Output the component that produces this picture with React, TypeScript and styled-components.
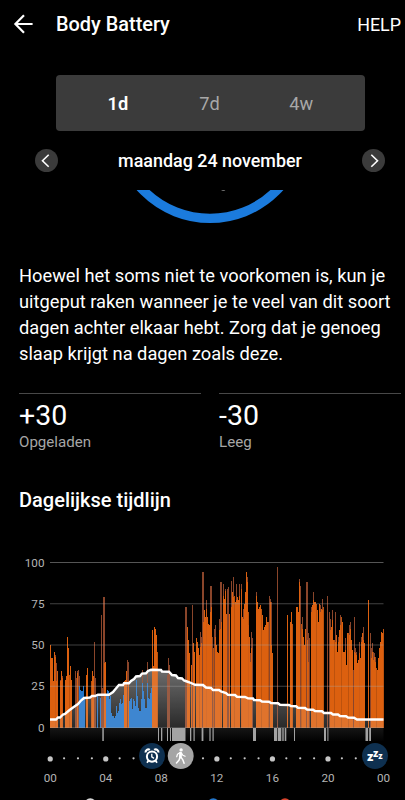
import styled, { createGlobalStyle } from "styled-components";

const colors = {
  stress: "#dc600f",
  stressDim: "#8a452a",
  rest: "#2476ca",
  ring: "#1b7bdd",
  muted: "#a6a6a6",
  panel: "#3b3b3b",
  badge: "#0e3050",
};

const GlobalStyle = createGlobalStyle`
  * {
    box-sizing: border-box;
  }

  body {
    margin: 0;
    background: #000;
    color: #fff;
    font-family: Roboto, "Liberation Sans", sans-serif;
  }
`;

const Screen = styled.div`
  width: 405px;
  height: 800px;
  overflow: hidden;
  background: #000;
`;

const Header = styled.header`
  display: flex;
  align-items: center;
  height: 48px;
  padding: 0 4px 0 12px;
`;

const HeaderTitle = styled.h1`
  flex: 1;
  margin: 0 0 0 22px;
  font-size: 19.9px;
  font-weight: 500;
`;

const HelpButton = styled.button`
  padding: 0;
  border: 0;
  background: none;
  color: #fff;
  font: 400 17.9px Roboto, sans-serif;
`;

const Tabs = styled.nav`
  display: flex;
  width: 309px;
  height: 56px;
  margin: 27px 0 0 56px;
  padding: 0 18px 0 16px;
  border-radius: 4px;
  background: ${colors.panel};
`;

const Tab = styled.button<{ $active?: boolean }>`
  flex: 1;
  padding: 0;
  border: 0;
  background: none;
  color: ${(props) => (props.$active ? "#fff" : "#a8a8a8")};
  font: ${(props) => (props.$active ? 600 : 400)} 18.2px Roboto, sans-serif;
`;

const DateRow = styled.div`
  display: flex;
  align-items: center;
  justify-content: space-between;
  height: 59px;
  padding: 0 20px 0 35px;
`;

const DateText = styled.div`
  font-size: 17.9px;
  font-weight: 500;
`;

const RoundButton = styled.button`
  display: flex;
  align-items: center;
  justify-content: center;
  width: 23px;
  height: 23px;
  padding: 0;
  border: 0;
  border-radius: 50%;
  background: ${colors.panel};
`;

const Gauge = styled.svg`
  display: block;
  width: 405px;
  height: 36px;
`;

const Message = styled.p`
  margin: 37px 0 0 19px;
  font-size: 18.27px;
  line-height: 26px;
  white-space: pre-line;
`;

const Stats = styled.div`
  display: grid;
  grid-template-columns: 182px 182px;
  gap: 18px;
  margin: 26px 0 0 19px;
`;

const Stat = styled.div`
  border-top: 1px solid #484848;
  padding-top: 5px;
`;

const StatValue = styled.div`
  font-size: 28.5px;
  line-height: 34px;
`;

const StatLabel = styled.div`
  color: ${colors.muted};
  font-size: 15.1px;
  line-height: 18px;
`;

const SectionTitle = styled.h2`
  margin: 36px 0 0 19px;
  font-size: 20px;
  font-weight: 500;
  line-height: 26px;
`;

const Timeline = styled.svg`
  display: block;
  width: 405px;
  height: 287px;
`;

const AxisLabel = styled.text`
  fill: #b4b4b4;
  font-size: 11.7px;
`;

const SleepLetter = styled.text<{ $size: number }>`
  fill: #fff;
  font-size: ${(props) => props.$size}px;
  font-weight: 900;
`;

type Run = { x: number; kind: "stress" | "dim" | "rest"; values: number[] };

// One value per pixel column, 0 is a gap
const runs: Run[] = [
  { x: 50, kind: "stress", values: [50, 42, 42, 28, 46, 43, 28, 34, 0, 0, 28, 34, 30, 0, 0, 29, 31, 55, 48, 32, 37, 29] },
  { x: 55, kind: "dim", values: [44, 39, 34, 0, 0, 29, 0, 31, 0, 0, 0, 0, 0, 48, 0, 37] },
  { x: 75, kind: "dim", values: [34, 30, 34, 35, 31] },
  { x: 77, kind: "stress", values: [33] },
  { x: 79, kind: "rest", values: [25, 23, 22, 22, 25, 17, 0] },
  { x: 86, kind: "stress", values: [32, 36, 0, 0, 0, 28, 34, 31] },
  { x: 94, kind: "dim", values: [52, 30] },
  { x: 97, kind: "rest", values: [19, 0, 0, 18] },
  { x: 101, kind: "dim", values: [68, 24, 79, 79] },
  { x: 104, kind: "stress", values: [39, 40] },
  { x: 106, kind: "rest", values: [20, 23, 22, 17, 19, 9, 7, 7, 6, 7, 13, 9, 10, 15, 17, 14, 15, 20, 23] },
  { x: 124, kind: "stress", values: [28, 29, 34, 0, 28] },
  { x: 127, kind: "dim", values: [41, 40] },
  { x: 129, kind: "rest", values: [16, 17, 18, 11, 17, 16, 13, 29, 19, 12, 10, 10, 17, 27, 22, 17, 12, 12, 27, 18, 17, 21, 24] },
  { x: 142, kind: "dim", values: [35] },
  { x: 147, kind: "dim", values: [40] },
  { x: 152, kind: "stress", values: [59, 37, 61, 60, 56, 46] },
  { x: 167, kind: "dim", values: [32, 42, 38] },
  { x: 185, kind: "dim", values: [73, 73] },
  { x: 187, kind: "stress", values: [61, 53, 45, 0, 38, 0, 51, 46, 0, 54, 52, 48, 44, 49, 51, 0, 64, 71, 67, 72, 67, 63, 62, 70, 73, 0, 48, 0, 55, 50, 46, 45, 59, 60, 64, 0, 80, 78, 83, 69, 0, 0, 69, 0, 73, 82, 79, 80, 76, 77, 79, 77, 80, 0, 84, 67, 66, 75, 82, 94, 88, 70, 55, 40, 48] },
  { x: 192, kind: "dim", values: [74] },
  { x: 200, kind: "dim", values: [58, 55, 94, 94, 0, 0, 77, 0, 0, 0, 86, 86, 55] },
  { x: 214, kind: "dim", values: [60, 62, 0, 0, 0, 66, 88, 88, 0, 87, 0, 84, 0, 84, 85, 0, 0, 89, 0, 91, 0, 0, 87, 0, 0, 87, 0, 87, 0, 72, 0, 0, 0, 91, 62, 0, 45, 58, 54] },
  { x: 256, kind: "stress", values: [80, 76, 72, 73, 74, 72, 68, 59, 61, 62, 67, 64, 64, 0, 76, 50, 45] },
  { x: 256, kind: "dim", values: [82] },
  { x: 269, kind: "dim", values: [80, 78, 76] },
  { x: 277, kind: "dim", values: [97] },
  { x: 287, kind: "stress", values: [68, 0, 0, 64, 70, 63] },
  { x: 291, kind: "dim", values: [70] },
  { x: 296, kind: "stress", values: [73, 73, 70, 88, 0, 63, 60, 55, 50, 60, 0, 53, 40] },
  { x: 299, kind: "dim", values: [90, 86, 0, 67, 0, 0, 0, 88, 88, 57, 54] },
  { x: 311, kind: "stress", values: [70, 74, 77, 76, 76, 75, 71, 64, 75, 70, 72, 71, 73] },
  { x: 311, kind: "dim", values: [73, 0, 82, 0, 0, 0, 0, 0, 0, 74, 0, 78] },
  { x: 327, kind: "dim", values: [80] },
  { x: 329, kind: "stress", values: [0, 59, 61, 65, 53, 53, 52, 56, 46, 52, 59, 62, 67, 64, 46, 46, 47, 38, 57, 57, 56, 60, 53, 47] },
  { x: 329, kind: "dim", values: [70, 66, 0, 71, 0, 0, 70, 0, 0, 55, 0, 68, 0, 0, 0, 0, 54, 0, 0, 0, 62, 64, 0, 0, 35, 67] },
  { x: 354, kind: "stress", values: [46, 45, 44, 39, 41, 45, 42, 52, 57, 53, 51] },
  { x: 355, kind: "dim", values: [48, 46, 0, 0, 52, 0, 55, 0, 61] },
  { x: 368, kind: "stress", values: [77] },
  { x: 370, kind: "dim", values: [57, 48, 51, 46, 45, 43] },
  { x: 371, kind: "stress", values: [42, 46, 41, 43, 40, 36, 35, 42, 48, 52, 58, 57, 60] },
];

// Battery level, [x, y] inside the plot
const level = [
  [50, 719.5], [56, 719.5], [58, 717.5], [60, 717.5], [63, 714.5], [65, 714], [69, 710.5], [73, 707.5], [78, 704], [81, 700.5], [84, 698],
  [90, 697.5], [92, 696], [95, 696], [98, 694.7], [109, 694.7], [113, 692], [118, 686], [119, 685], [123, 685], [124, 683.3], [129, 683.3],
  [131, 681], [134, 679], [136, 676.5], [140, 676], [142, 673.6], [146, 673.3], [148, 671], [151, 669.8], [161, 670], [162, 671.5],
  [169, 671.7], [172, 675], [176, 675.5], [178, 678], [182, 678.5], [184, 680.5], [187, 681.5], [190, 682.5], [195, 684.8], [203, 685],
  [206, 687.5], [211, 688], [213, 690], [219, 690], [221, 691.5], [226, 693], [228, 694.8], [235, 695], [237, 696.7], [245, 697],
  [248, 698.4], [253, 698.5], [254, 700], [260, 700.3], [262, 701.6], [269, 701.8], [271, 703], [278, 703.3], [280, 704.7], [289, 705],
  [291, 706], [296, 706.3], [298, 707.7], [305, 708], [307, 709.5], [313, 709.7], [315, 711], [322, 711.3], [324, 713], [331, 713],
  [333, 714.5], [338, 714.5], [340, 716], [346, 716.3], [348, 717.5], [354, 717.8], [357, 719.5], [383.5, 719.5],
];

// Activity marks under the axis, [x, width]
const activity = [
  [102.3, 1.5], [158, 1], [161, 1.3], [167, 1], [170, 1], [172, 13.5], [190, 1.3], [193.5, 1.2], [201.6, 1.8], [209.4, 1.2],
  [212.5, 1.2], [253, 3], [274, 3], [277.7, 3.6], [282.3, 1.4], [284.7, 1.6], [294, 1], [324, 2], [327.4, 1], [365.5, 2.6], [369.2, 1.8],
];

const chartTop = 513;
const baseline = 727.5;
const toY = (value: number) => baseline - value * 1.65;

const levelPoints = level.map((p) => p.join(",")).join(" ");
const areaPoints = `50,${baseline} ${levelPoints} 383.5,${baseline}`;

const kindColor = {
  stress: colors.stress,
  dim: colors.stressDim,
  rest: colors.rest,
};

const Bars = () => (
  <g shapeRendering="crispEdges">
    {[...runs]
      .sort((a, b) => Number(b.kind === "dim") - Number(a.kind === "dim"))
      .map((run) =>
        run.values.map((value, i) =>
          value > 0 ? (
            <rect
              key={`${run.kind}-${run.x + i}`}
              x={run.x + i}
              y={Math.round(toY(value))}
              width={1}
              height={728 - Math.round(toY(value))}
              fill={kindColor[run.kind]}
              opacity={run.kind === "stress" && i % 7 === 5 ? 0.86 : 1}
            />
          ) : null
        )
      )}
  </g>
);

const AlarmBadge = () => (
  <g transform="translate(152 756)" fill="none" stroke="#fff">
    <circle r="13" fill={colors.badge} stroke="none" />
    <circle cy="0.6" r="5.1" strokeWidth="2" />
    <path d="M-0.2 -2.3V0.9L2 2.4" strokeWidth="1.3" />
    <path d="M-6.3 -3.4A2.6 2.6 0 0 1 -2.2 -6.1M6.3 -3.4A2.6 2.6 0 0 0 2.2 -6.1" strokeWidth="2.2" />
    <path d="M-3.5 4.5L-5 6.7M3.5 4.5L5 6.7" strokeWidth="1.8" />
  </g>
);

const WalkBadge = () => (
  <g transform="translate(180.7 756)">
    <circle r="13" fill="#a5a5a5" />
    <circle cx="0.4" cy="-6.1" r="1.7" fill="#fff" />
    <g fill="none" stroke="#fff" strokeLinecap="round" strokeLinejoin="round">
      <path d="M-0.1 -2.8L-0.3 1.2" strokeWidth="2.8" />
      <path d="M-0.6 -3.4L-3.2 -1.8L-4 0.8M0.8 -3L2.1 -0.8L4.4 0.2" strokeWidth="1.2" />
      <path d="M-0.8 1.4L-1.6 4L-4.2 7M0.4 1.4L2 3.6L3.4 7.2" strokeWidth="1.5" />
    </g>
  </g>
);

const SleepBadge = () => (
  <g>
    <circle cx="375" cy="756" r="13" fill={colors.badge} />
    <SleepLetter x="367" y="760.5" $size={12.5}>
      z
    </SleepLetter>
    <SleepLetter x="373.1" y="756.8" $size={10.5}>
      z
    </SleepLetter>
    <SleepLetter x="378.2" y="759.2" $size={8.5}>
      z
    </SleepLetter>
  </g>
);

const hours = Array.from({ length: 25 }, (_, hour) => hour);

const DailyTimeline = () => (
  <Timeline viewBox={`0 ${chartTop} 405 287`}>
    <defs>
      <linearGradient id="area" x1="0" y1="670" x2="0" y2="728" gradientUnits="userSpaceOnUse">
        <stop offset="0" stopColor="#585858" />
        <stop offset="1" stopColor="#0c0c0c" />
      </linearGradient>
      <linearGradient id="strip" x1="0" y1="0" x2="0" y2="1">
        <stop offset="0" stopColor="#151515" />
        <stop offset="1" stopColor="#020202" />
      </linearGradient>
    </defs>

    <polygon points={areaPoints} fill="url(#area)" />
    <Bars />
    <polygon points={areaPoints} fill="#fff" opacity="0.12" />

    {[0, 25, 50, 75, 100].map((value) => (
      <g key={value}>
        <rect x="50" y={toY(value) - 0.5} width="333.5" height="1" fill="#aaa" opacity={value === 100 ? 0.5 : 0.38} />
        <AxisLabel x="44.5" y={toY(value) + 4.2} textAnchor="end">
          {value}
        </AxisLabel>
      </g>
    ))}

    <polyline points={levelPoints} fill="none" stroke="#fff" strokeWidth="2.4" />

    <rect x="50" y="728" width="333.5" height="13" fill="url(#strip)" />
    {activity.map(([x, width]) => (
      <rect key={x} x={x} y="728" width={width} height="13" fill="#a3a3a3" />
    ))}

    {hours.map((hour) => (
      <circle
        key={hour}
        cx={50.2 + hour * 13.89}
        cy={hour % 4 === 0 ? 758.9 : 758.3}
        r={hour % 4 === 0 ? 2.6 : 1.1}
        fill="#c6c6c6"
      />
    ))}
    {hours
      .filter((hour) => hour % 4 === 0)
      .map((hour) => (
        <AxisLabel key={hour} x={50.2 + hour * 13.89} y="782.4" textAnchor="middle">
          {String(hour % 24).padStart(2, "0")}
        </AxisLabel>
      ))}

    <AlarmBadge />
    <WalkBadge />
    <SleepBadge />

    {/* tops of the legend dots */}
    <circle cx="90.3" cy="804.3" r="6" fill="#d8d8d8" />
    <circle cx="213.3" cy="804.3" r="6" fill="#2476ca" />
    <circle cx="285" cy="804.3" r="6" fill="#d8432c" />
  </Timeline>
);

const App = () => {
  return (
    <Screen>
      <GlobalStyle />
      <Header>
        <svg width="22" height="22" viewBox="0 0 22 22" fill="none" stroke="#fff" strokeWidth="2.2">
          <path d="M20.6 11H3.4M12 2.2L3.4 11L12 19.8" />
        </svg>
        <HeaderTitle>Body Battery</HeaderTitle>
        <HelpButton>HELP</HelpButton>
      </Header>

      <Tabs>
        <Tab $active>1d</Tab>
        <Tab>7d</Tab>
        <Tab>4w</Tab>
      </Tabs>

      <DateRow>
        <RoundButton>
          <svg width="23" height="23" viewBox="0 0 23 23" fill="none" stroke="#fff" strokeWidth="1.6">
            <path d="M13.7 5.7L7.5 11.7L13.7 17.7" />
          </svg>
        </RoundButton>
        <DateText>maandag 24 november</DateText>
        <RoundButton>
          <svg width="23" height="23" viewBox="0 0 23 23" fill="none" stroke="#fff" strokeWidth="1.6">
            <path d="M9.3 5.7L15.5 11.7L9.3 17.7" />
          </svg>
        </RoundButton>
      </DateRow>

      <Gauge viewBox="0 190 405 36">
        <circle cx="210" cy="125" r="93.4" fill="none" stroke={colors.ring} strokeWidth="9.3" />
        <ellipse cx="223.3" cy="190" rx="2" ry="0.8" fill="#999" />
      </Gauge>

      <Message>
        {`Hoewel het soms niet te voorkomen is, kun je
        uitgeput raken wanneer je te veel van dit soort
        dagen achter elkaar hebt. Zorg dat je genoeg
        slaap krijgt na dagen zoals deze.`}
      </Message>

      <Stats>
        <Stat>
          <StatValue>+30</StatValue>
          <StatLabel>Opgeladen</StatLabel>
        </Stat>
        <Stat>
          <StatValue>-30</StatValue>
          <StatLabel>Leeg</StatLabel>
        </Stat>
      </Stats>

      <SectionTitle>Dagelijkse tijdlijn</SectionTitle>

      <DailyTimeline />
    </Screen>
  );
};

export default App;
